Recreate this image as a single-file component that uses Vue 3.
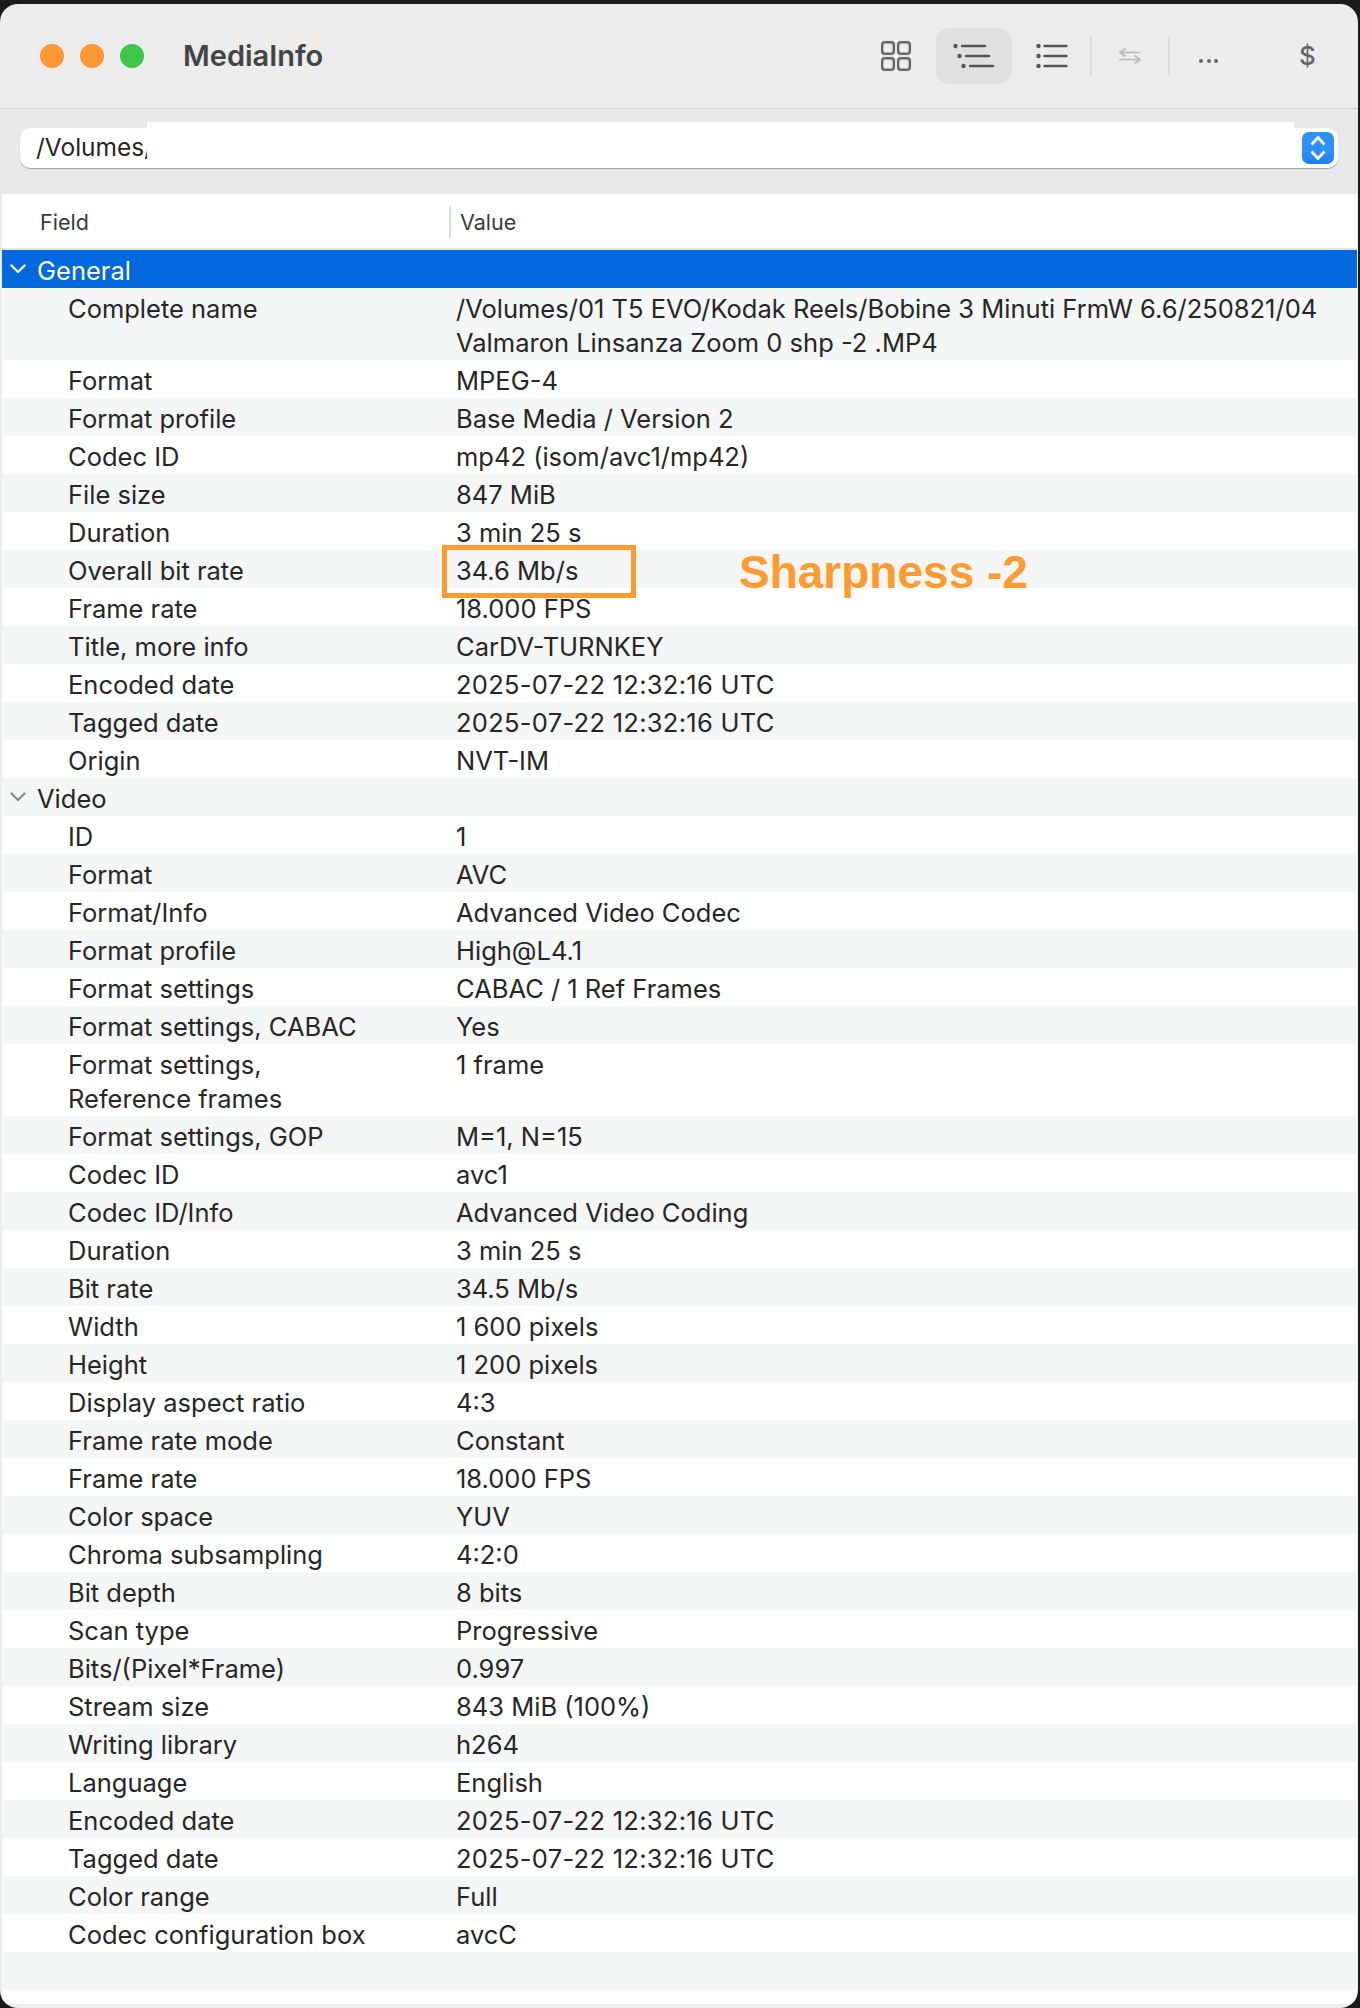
<script setup>
const general = [
  ['Complete name', '/Volumes/01 T5 EVO/Kodak Reels/Bobine 3 Minuti FrmW 6.6/250821/04\nValmaron Linsanza Zoom 0 shp -2 .MP4'],
  ['Format', 'MPEG-4'],
  ['Format profile', 'Base Media / Version 2'],
  ['Codec ID', 'mp42 (isom/avc1/mp42)'],
  ['File size', '847 MiB'],
  ['Duration', '3 min 25 s'],
  ['Overall bit rate', '34.6 Mb/s'],
  ['Frame rate', '18.000 FPS'],
  ['Title, more info', 'CarDV-TURNKEY'],
  ['Encoded date', '2025-07-22 12:32:16 UTC'],
  ['Tagged date', '2025-07-22 12:32:16 UTC'],
  ['Origin', 'NVT-IM']
]
const video = [
  ['ID', '1'],
  ['Format', 'AVC'],
  ['Format/Info', 'Advanced Video Codec'],
  ['Format profile', 'High@L4.1'],
  ['Format settings', 'CABAC / 1 Ref Frames'],
  ['Format settings, CABAC', 'Yes'],
  ['Format settings,\nReference frames', '1 frame'],
  ['Format settings, GOP', 'M=1, N=15'],
  ['Codec ID', 'avc1'],
  ['Codec ID/Info', 'Advanced Video Coding'],
  ['Duration', '3 min 25 s'],
  ['Bit rate', '34.5 Mb/s'],
  ['Width', '1 600 pixels'],
  ['Height', '1 200 pixels'],
  ['Display aspect ratio', '4:3'],
  ['Frame rate mode', 'Constant'],
  ['Frame rate', '18.000 FPS'],
  ['Color space', 'YUV'],
  ['Chroma subsampling', '4:2:0'],
  ['Bit depth', '8 bits'],
  ['Scan type', 'Progressive'],
  ['Bits/(Pixel*Frame)', '0.997'],
  ['Stream size', '843 MiB (100%)'],
  ['Writing library', 'h264'],
  ['Language', 'English'],
  ['Encoded date', '2025-07-22 12:32:16 UTC'],
  ['Tagged date', '2025-07-22 12:32:16 UTC'],
  ['Color range', 'Full'],
  ['Codec configuration box', 'avcC']
]
</script>

<template>
  <div class="window">
    <header class="titlebar">
      <div class="lights">
        <span class="light orange"></span>
        <span class="light orange"></span>
        <span class="light green"></span>
      </div>
      <h1 class="title">MediaInfo</h1>
      <div class="toolbar">
        <svg class="ic grid" width="30" height="30" viewBox="0 0 30 30" fill="none" stroke="#666" stroke-width="2.4">
          <rect x="1.2" y="1.2" width="11.6" height="11.6" rx="2.6" />
          <rect x="17.2" y="1.2" width="11.6" height="11.6" rx="2.6" />
          <rect x="1.2" y="17.2" width="11.6" height="11.6" rx="2.6" />
          <rect x="17.2" y="17.2" width="11.6" height="11.6" rx="2.6" />
        </svg>
        <div class="pill">
          <svg width="44" height="26" viewBox="0 0 44 26" fill="none" stroke="#555" stroke-width="2.4" stroke-linecap="round">
            <circle cx="2.5" cy="3" r="2.2" fill="#555" stroke="none" />
            <circle cx="6.5" cy="13" r="2.2" fill="#555" stroke="none" />
            <circle cx="10.5" cy="23" r="2.2" fill="#555" stroke="none" />
            <path d="M9 3h23M13 13h23M17 23h23" />
          </svg>
        </div>
        <svg class="ic list" width="32" height="26" viewBox="0 0 32 26" fill="none" stroke="#555" stroke-width="2.4" stroke-linecap="round">
          <circle cx="2.5" cy="3" r="2.2" fill="#555" stroke="none" />
          <circle cx="2.5" cy="13" r="2.2" fill="#555" stroke="none" />
          <circle cx="2.5" cy="23" r="2.2" fill="#555" stroke="none" />
          <path d="M8.5 3h22M8.5 13h22M8.5 23h22" />
        </svg>
        <span class="sep first"></span>
        <svg class="ic swap" width="22" height="16" viewBox="0 0 22 16" fill="none" stroke="#b9b9b9" stroke-width="1.6" stroke-linecap="round" stroke-linejoin="round">
          <path d="M1 4.500h20M1 4.500L6 1M1 4.500L6 8" />
          <path d="M21 11.500H1M21 11.500L16 8M21 11.500L16 15" />
        </svg>
        <span class="sep second"></span>
        <span class="more"><i></i><i></i><i></i></span>
        <span class="dollar">$</span>
      </div>
    </header>

    <div class="pathbar">
      <div class="combo">
        <span class="path">/Volumes/</span>
        <div class="stepper">
          <svg width="16" height="26" viewBox="0 0 16 26" fill="none" stroke="#fff" stroke-width="2.800" stroke-linecap="square">
            <path d="M2.500 8.500L8 2.500l5.500 6M2.500 17.500L8 23.500l5.500-6" />
          </svg>
        </div>
      </div>
    </div>
    <div class="mask"></div>

    <section class="table">
      <div class="head">
        <span class="head-field">Field</span>
        <span class="head-value">Value</span>
      </div>
      <div class="group selected">
        <svg class="chev" width="16" height="10" viewBox="0 0 16 10" fill="none" stroke="#fff" stroke-width="2.400" stroke-linecap="round" stroke-linejoin="round">
          <path d="M1.500 1.500L8 8l6.500-6.500" />
        </svg>
        General
      </div>
      <div class="rows">
        <div v-for="(r, i) in general" :key="'g' + i" class="row" :class="{ alt: i % 2 === 0 }">
          <span class="field">{{ r[0] }}</span>
          <span class="value" :class="{ date: r[1].endsWith('UTC') }">{{ r[1] }}</span>
        </div>
      </div>
      <div class="group alt">
        <svg class="chev" width="16" height="10" viewBox="0 0 16 10" fill="none" stroke="#8a8a8a" stroke-width="2.200" stroke-linecap="round" stroke-linejoin="round">
          <path d="M1.500 1.500L8 8l6.500-6.500" />
        </svg>
        Video
      </div>
      <div class="rows">
        <div v-for="(r, i) in video" :key="'v' + i" class="row" :class="{ alt: i % 2 === 1 }">
          <span class="field">{{ r[0] }}</span>
          <span class="value" :class="{ date: r[1].endsWith('UTC') }">{{ r[1] }}</span>
        </div>
      </div>
      <div class="filler"></div>
    </section>

    <div class="callout-box"></div>
    <div class="callout-text">Sharpness -2</div>
  </div>
</template>

<style>
html, body {
  margin: 0;
  background: #1b1b1b;
}
</style>

<style scoped>
.window {
  position: relative;
  box-sizing: border-box;
  width: 1358px;
  height: 2004px;
  margin-top: 4px;
  border-radius: 18px;
  overflow: hidden;
  background: #ececec;
  font-family: Inter, "Liberation Sans", sans-serif;
  color: #262626;
}
.titlebar {
  box-sizing: border-box;
  height: 105px;
  display: flex;
  align-items: center;
  padding: 0 45px 0 40px;
  border-bottom: 1px solid #cfcfcf;
}
.lights {
  display: flex;
  gap: 16px;
}
.light {
  width: 24px;
  height: 24px;
  border-radius: 50%;
}
.orange { background: #fd9731; }
.green { background: #3fc647; }
.title {
  margin: -2px 0 0 39px;
  font-size: 29px;
  font-weight: 600;
  color: #444;
}
.toolbar {
  margin-left: auto;
  display: flex;
  align-items: center;
}
.ic { flex: none; }
.pill {
  flex: none;
  width: 76px;
  height: 56px;
  margin-left: 25px;
  border-radius: 14px;
  background: #e0e0e0;
  display: flex;
  align-items: center;
  padding-left: 17px;
  box-sizing: border-box;
}
.list { margin-left: 24px; }
.sep {
  flex: none;
  width: 2px;
  height: 40px;
  background: #dcdcdc;
}
.sep.first { margin-left: 22px; }
.swap { margin-left: 27px; }
.sep.second { margin-left: 27px; }
.more {
  flex: none;
  margin: 10px 0 0 29px;
  width: 19px;
  display: flex;
  justify-content: space-between;
}
.more i {
  width: 4px;
  height: 4px;
  border-radius: 50%;
  background: #666;
}
.dollar {
  flex: none;
  margin-left: 81px;
  width: 14px;
  font-size: 26px;
  font-weight: 500;
  color: #666;
  text-align: center;
  line-height: 1;
}
.pathbar {
  box-sizing: border-box;
  height: 85px;
  padding: 19px 20px 0;
  background: #e8e8e8;
}
.combo {
  box-sizing: border-box;
  height: 40px;
  background: #fff;
  border-radius: 10px;
  box-shadow: 0 1px 1px rgba(0, 0, 0, 0.3);
  display: flex;
  align-items: center;
  justify-content: space-between;
  padding: 0 4px 0 16px;
}
.path {
  font-size: 24.5px;
  line-height: 36px;
  margin-top: -2px;
  color: #262626;
}
.stepper {
  width: 32px;
  height: 32px;
  border-radius: 7px;
  background: linear-gradient(#2b91fc 60%, #1f7fee);
  display: flex;
  align-items: center;
  justify-content: center;
}
.mask {
  position: absolute;
  left: 147px;
  top: 118px;
  width: 1147px;
  height: 46px;
  background: #fff;
}
.table {
  margin: 0 1px 0 2px;
  background: #fff;
  height: 1810px;
}
.head {
  box-sizing: border-box;
  height: 56px;
  padding-top: 2px;
  border-bottom: 2px solid #e4e4e4;
  display: flex;
  align-items: center;
  font-size: 21.5px;
  color: #3a3a3a;
  position: relative;
}
.head-field { margin-left: 38px; }
.head-value { position: absolute; left: 458px; }
.head::after {
  content: "";
  position: absolute;
  left: 447px;
  top: 12px;
  width: 1.5px;
  height: 32px;
  background: #dedede;
}
.group {
  position: relative;
  box-sizing: border-box;
  height: 38px;
  padding: 4px 0 0 35px;
  font-size: 25.5px;
  line-height: 34px;
}
.selected {
  background: #0469de;
  color: #fff;
}
.chev {
  position: absolute;
  left: 8px;
  top: 14px;
}
.alt { background: #f4f5f5; }
.row {
  display: grid;
  grid-template-columns: 454px 1fr;
  padding: 4px 0 0;
  font-size: 25.5px;
  line-height: 34px;
}
.field {
  padding-left: 66px;
  white-space: pre-line;
}
.value { white-space: pre-line; }
.date { letter-spacing: 0.28px; }
.filler {
  height: 38px;
  background: #f4f5f5;
}
.callout-box {
  position: absolute;
  left: 442px;
  top: 541px;
  width: 194px;
  height: 53px;
  box-sizing: border-box;
  border: 5px solid #ff9a2e;
}
.callout-text {
  position: absolute;
  left: 739px;
  top: 540px;
  font-family: "Liberation Sans", sans-serif;
  font-weight: 700;
  font-size: 46px;
  line-height: 56px;
  color: #ff9a2e;
  white-space: nowrap;
}
</style>
